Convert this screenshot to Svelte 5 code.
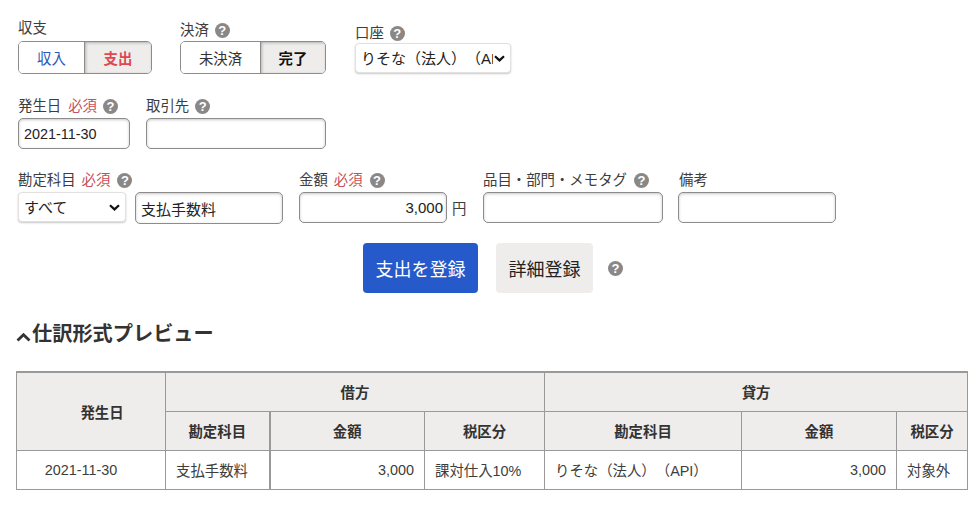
<script>
	const HELP = '?';

	const debit = { account: '支払手数料', amount: '3,000', tax: '課対仕入10%' };
	const credit = { account: 'りそな（法人）（API）', amount: '3,000', tax: '対象外' };
</script>

{#snippet help()}
	<span class="help">{HELP}</span>
{/snippet}

<main class="page">
	<div class="row row-1">
		<div class="field">
			<div class="label">収支</div>
			<div class="seg">
				<button class="seg-btn income">収入</button>
				<button class="seg-btn on expense">支出</button>
			</div>
		</div>
		<div class="field settle">
			<div class="label">決済 {@render help()}</div>
			<div class="seg">
				<button class="seg-btn open">未決済</button>
				<button class="seg-btn on done">完了</button>
			</div>
		</div>
		<div class="field account">
			<div class="label">口座 {@render help()}</div>
			<select class="select wide">
				<option>りそな（法人）（API）</option>
			</select>
		</div>
	</div>

	<div class="row row-2">
		<div class="field">
			<div class="label">発生日 <span class="req">必須</span> {@render help()}</div>
			<input class="input date" value="2021-11-30" />
		</div>
		<div class="field">
			<div class="label">取引先 {@render help()}</div>
			<input class="input partner" />
		</div>
	</div>

	<div class="row row-3">
		<div class="field">
			<div class="label">勘定科目 <span class="req">必須</span> {@render help()}</div>
			<div class="inline">
				<select class="select short"><option>すべて</option></select>
				<input class="input subject" value="支払手数料" />
			</div>
		</div>
		<div class="field">
			<div class="label">金額 <span class="req">必須</span> {@render help()}</div>
			<div class="inline amount-wrap">
				<input class="input amount" value="3,000" />
				<span class="yen">円</span>
			</div>
		</div>
		<div class="field">
			<div class="label">品目・部門・メモタグ {@render help()}</div>
			<input class="input tags" />
		</div>
		<div class="field">
			<div class="label">備考</div>
			<input class="input memo" />
		</div>
	</div>

	<div class="actions">
		<button class="primary">支出を登録</button>
		<button class="secondary">詳細登録</button>
		{@render help()}
	</div>

	<h2 class="heading">
		<svg class="chevron" width="15" height="10" viewBox="0 0 15 10" aria-hidden="true">
			<path d="M1.5 8.5 7.5 2.8l6 5.7" fill="none" stroke="#333" stroke-width="2.8" />
		</svg>
		仕訳形式プレビュー
	</h2>

	<table class="preview">
		<colgroup>
			<col style="width: 149px" />
			<col style="width: 104px" />
			<col style="width: 155px" />
			<col style="width: 120px" />
			<col style="width: 197px" />
			<col style="width: 155px" />
			<col style="width: 71px" />
		</colgroup>
		<thead>
			<tr>
				<th rowspan="2" class="date-head">発生日</th>
				<th colspan="3">借方</th>
				<th colspan="3">貸方</th>
			</tr>
			<tr>
				<th>勘定科目</th>
				<th class="thick">金額</th>
				<th>税区分</th>
				<th>勘定科目</th>
				<th>金額</th>
				<th>税区分</th>
			</tr>
		</thead>
		<tbody>
			<tr>
				<td class="date-cell">2021-11-30</td>
				<td>{debit.account}</td>
				<td class="num thick">{debit.amount}</td>
				<td>{debit.tax}</td>
				<td>{credit.account}</td>
				<td class="num">{credit.amount}</td>
				<td>{credit.tax}</td>
			</tr>
		</tbody>
	</table>
</main>

<style>
	:global(body) {
		margin: 0;
		background: #fff;
	}
	.page {
		width: 973px;
		height: 517px;
		box-sizing: border-box;
		padding: 18px 6px 0 18px;
		overflow: hidden;
		color: #3d3d3d;
		font-family: "Liberation Sans", "Noto Sans CJK JP", sans-serif;
		font-size: 14.4px;
		text-spacing-trim: space-all;
	}
	.row {
		display: flex;
		align-items: flex-start;
	}
	.row-2 {
		margin-top: 22px;
		gap: 16px;
	}
	.row-3 {
		margin-top: 21px;
		gap: 16px;
	}
	.field {
		display: flex;
		flex-direction: column;
	}
	.settle {
		margin-left: 28px;
	}
	.settle .label {
		margin-top: 2px;
		margin-bottom: 1px;
	}
	.account {
		margin-left: 29px;
		margin-top: 5px;
	}
	.account .label {
		margin-bottom: 0;
	}
	.label {
		display: flex;
		align-items: center;
		gap: 6px;
		height: 20px;
		margin-bottom: 2px;
		line-height: 20px;
		white-space: nowrap;
	}
	.row-1 .field:first-child .label {
		margin-bottom: 3px;
	}
	.row-2 .label .req,
	.row-3 .label .help {
		margin-left: 1px;
	}
	.req {
		color: #c8505a;
	}
	.help {
		display: inline-flex;
		align-items: center;
		justify-content: center;
		width: 15px;
		height: 15px;
		border-radius: 50%;
		background: #8a8887;
		color: #fff;
		font-family: "Liberation Sans", sans-serif;
		font-size: 13px;
		font-weight: 700;
		line-height: 1;
	}
	.seg {
		display: flex;
		height: 33px;
		box-sizing: border-box;
		border: 1px solid #8e8c8b;
		border-radius: 5px;
		overflow: hidden;
	}
	.seg-btn {
		margin: 0;
		padding: 0;
		border: 0;
		background: #fff;
		font: inherit;
		color: #333;
	}
	.seg-btn.on {
		border-left: 1px solid #8e8c8b;
		background: #eeedec;
		box-shadow: inset 1px 1px 3px rgba(0, 0, 0, 0.25);
		font-weight: 700;
	}
	.income {
		width: 65px;
		color: #2a5ab8;
	}
	.expense {
		width: 67px;
		color: #e0484f;
	}
	.open {
		width: 79px;
	}
	.done {
		width: 65px;
		color: #111;
	}
	.select {
		box-sizing: border-box;
		height: 30px;
		padding: 0 17px 0 5px;
		border: 1px solid #e2e1e0;
		border-radius: 4px;
		appearance: none;
		background: #fff url("data:image/svg+xml,%3Csvg xmlns='http://www.w3.org/2000/svg' width='11' height='7'%3E%3Cpath d='M1 1.2l4.5 4.2L10 1.2' fill='none' stroke='%23111' stroke-width='2.2'/%3E%3C/svg%3E") no-repeat right 5px center;
		box-shadow: 0 1px 2px rgba(0, 0, 0, 0.22);
		color: #222;
		font: inherit;
		font-size: 15px;
		text-spacing-trim: space-all;
	}
	.wide {
		width: 156px;
	}
	.short {
		width: 108px;
	}
	.input {
		box-sizing: border-box;
		height: 31px;
		padding: 0 5px;
		border: 1px solid #8e8c8b;
		border-radius: 5px;
		background: #fff;
		box-shadow: inset 0 1px 3px rgba(0, 0, 0, 0.22);
		color: #222;
		font: inherit;
		font-size: 15px;
		outline: none;
	}
	.date {
		width: 112px;
		font-size: 14.4px;
	}
	.partner {
		width: 180px;
	}
	.inline {
		display: flex;
		align-items: flex-start;
	}
	.subject {
		width: 148px;
		height: 32px;
		margin-left: 9px;
	}
	.amount {
		width: 148px;
		padding-right: 3px;
		text-align: right;
	}
	.amount-wrap {
		align-items: center;
		gap: 5px;
	}
	.yen {
		width: 15px;
	}
	.tags {
		width: 180px;
	}
	.memo {
		width: 158px;
		margin-left: -1px;
	}
	.actions {
		display: flex;
		align-items: center;
		margin: 19px 0 0 345px;
	}
	.primary,
	.secondary {
		height: 50px;
		padding: 0;
		border: 0;
		border-radius: 4px;
		font: inherit;
		font-size: 18px;
	}
	.primary {
		width: 115px;
		background: #2659c9;
		color: #fff;
	}
	.secondary {
		width: 97px;
		margin: 0 15px 0 18px;
		background: #eeedec;
		color: #222;
	}
	.heading {
		display: flex;
		align-items: center;
		gap: 1px;
		margin: 27px 0 0 -2px;
		height: 28px;
		font-size: 20.2px;
		line-height: 28px;
		font-weight: 700;
		color: #333;
	}
	.chevron {
		margin-top: 6px;
	}
	.preview {
		width: 951px;
		margin: 23px 0 0 -2px;
		border-collapse: collapse;
		table-layout: fixed;
		font-size: 14.4px;
	}
	th,
	td {
		height: 39px;
		box-sizing: border-box;
		padding: 0 10px;
		border: 1px solid #999;
		text-align: left;
		white-space: nowrap;
	}
	thead tr:first-child th {
		border-top-width: 2px;
	}
	th {
		background: #eeedec;
		color: #333;
		text-align: center;
		font-weight: 700;
	}
	.thick {
		border-left-width: 2px;
	}
	.date-head {
		padding-left: 32px;
		padding-right: 10px;
	}
	.date-cell {
		padding-right: 30px;
		text-align: center;
	}
	.num {
		text-align: right;
	}
</style>
